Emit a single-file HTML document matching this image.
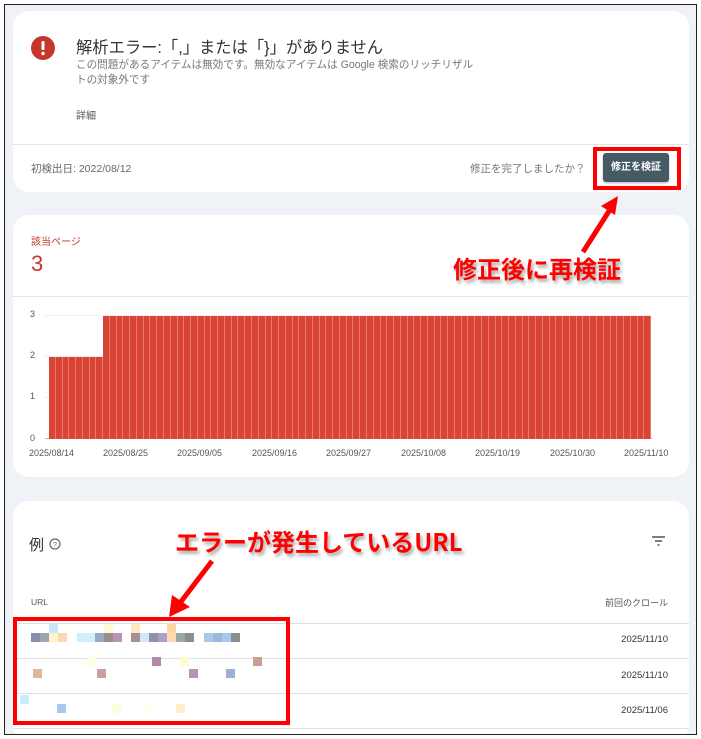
<!DOCTYPE html>
<html><head><meta charset="utf-8"><style>
*{margin:0;padding:0;box-sizing:border-box}
body{width:701px;height:739px;background:#fff;position:relative;overflow:hidden;font-family:"Liberation Sans","Noto Sans CJK JP",sans-serif;color:#3c4043}
.frame{position:absolute;left:4px;top:4px;width:693px;height:731px;border:1px solid #222;background:#eff2f7;overflow:hidden}
.card{position:absolute;left:8px;width:676px;background:#fff;border-radius:16px}
.abs{position:absolute;white-space:nowrap}
.red{position:absolute;border:4px solid #f00}
.ann{position:absolute;color:#f00;font-weight:bold;font-size:24px;white-space:nowrap;text-shadow:2px 3px 3px rgba(0,0,0,.35);font-family:"Noto Sans CJK JP",sans-serif}
.bars{position:absolute;left:44px;top:311px;width:602px;height:123px;display:flex;align-items:flex-end}
.bars div{flex:1;background:#d94435;border-right:1px solid #e8796f}
.yl{position:absolute;left:25px;font-size:9px;color:#555}
.xl{position:absolute;top:443px;font-size:9px;color:#555}
.gl{position:absolute;left:40px;width:607px;height:1px;background:#eee}
.row{position:absolute;left:8px;width:676px;height:1px;background:#e0e0e0}
.date{position:absolute;right:28px;font-size:9.5px;color:#333}
.px{position:absolute;width:9px;height:9px}
</style></head><body>
<div class="frame">
<div class="card" style="top:6px;height:181px"></div>
<div class="card" style="top:210px;height:262px"></div>
<div class="card" style="top:496px;height:240px"></div>

<svg class="abs" style="left:26px;top:31px" width="24" height="24" viewBox="0 0 24 24"><circle cx="12" cy="12" r="12" fill="#c5372c"/><rect x="10.5" y="5" width="3" height="9" rx="1" fill="#fff"/><circle cx="12" cy="17.5" r="1.7" fill="#fff"/></svg>
<div class="abs" style="left:71px;top:29px;font-size:16.3px;color:#333">解析エラー:「,」または「}」がありません</div>
<div class="abs" style="left:71px;top:53px;font-size:10.6px;color:#777;line-height:15px">この問題があるアイテムは無効です。無効なアイテムは Google 検索のリッチリザル<br>トの対象外です</div>
<div class="abs" style="left:71px;top:102px;font-size:10px;color:#555">詳細</div>
<div class="abs" style="left:8px;top:139px;width:676px;height:1px;background:#e3e3e3"></div>
<div class="abs" style="left:26px;top:156px;font-size:10.5px;color:#666">初検出日: 2022/08/12</div>
<div class="abs" style="left:465px;top:156px;font-size:10.5px;color:#777">修正を完了しましたか？</div>
<div class="abs" style="left:598px;top:148px;width:66px;height:29px;background:#465a64;border-radius:3px;color:#fff;font-size:10px;font-weight:bold;text-align:center;line-height:29px;box-shadow:0 1px 2px rgba(0,0,0,.3)">修正を検証</div>
<div class="red" style="left:588px;top:142px;width:88px;height:43px"></div>
<svg class="abs" style="left:570px;top:185px" width="50" height="70"><line x1="8" y1="62" x2="36" y2="18" stroke="#f00" stroke-width="5"/><polygon points="43,6 26,16 40,25" fill="#f00"/></svg>
<div class="ann" style="left:448px;top:245px">修正後に再検証</div>

<div class="abs" style="left:26px;top:228px;font-size:10px;color:#c5372c">該当ページ</div>
<div class="abs" style="left:26px;top:246px;font-size:22px;color:#c5372c">3</div>
<div class="abs" style="left:8px;top:291px;width:676px;height:1px;background:#e3e3e3"></div>
<div class="gl" style="top:310px"></div><div class="gl" style="top:351px"></div><div class="gl" style="top:392px"></div><div class="gl" style="top:433px;background:#bbb"></div>
<div class="yl" style="top:304px">3</div><div class="yl" style="top:345px">2</div><div class="yl" style="top:386px">1</div><div class="yl" style="top:428px">0</div>
<div class="bars" id="bars"></div>
<div class="xl" style="left:24px">2025/08/14</div>
<div class="xl" style="left:98px">2025/08/25</div>
<div class="xl" style="left:172px">2025/09/05</div>
<div class="xl" style="left:247px">2025/09/16</div>
<div class="xl" style="left:321px">2025/09/27</div>
<div class="xl" style="left:396px">2025/10/08</div>
<div class="xl" style="left:470px">2025/10/19</div>
<div class="xl" style="left:545px">2025/10/30</div>
<div class="xl" style="left:619px">2025/11/10</div>

<div class="abs" style="left:24px;top:529px;font-size:15px;color:#333">例</div>
<svg class="abs" style="left:44px;top:533px" width="12" height="12"><circle cx="6" cy="6" r="5" fill="none" stroke="#666" stroke-width="1.2"/><text x="6" y="9" font-size="7" text-anchor="middle" fill="#666" font-family="Liberation Sans">?</text></svg>
<svg class="abs" style="left:646px;top:530px" width="16" height="12"><path d="M1 2h13M4 6h7M6.5 10h2" stroke="#555" stroke-width="1.4"/></svg>
<div class="ann" style="left:170px;top:518px">エラーが発生しているURL</div>
<svg class="abs" style="left:155px;top:550px" width="60" height="65"><line x1="52" y1="6" x2="20" y2="48" stroke="#f00" stroke-width="5"/><polygon points="9,62 12,40 30,52" fill="#f00"/></svg>
<div class="abs" style="left:26px;top:592px;font-size:8.5px;color:#555">URL</div>
<div class="abs" style="right:28px;top:591px;font-size:9px;color:#555">前回のクロール</div>
<div class="row" style="top:618px"></div><div class="row" style="top:653px"></div><div class="row" style="top:688px"></div><div class="row" style="top:723px"></div>
<div class="date" style="top:629px">2025/11/10</div>
<div class="date" style="top:665px">2025/11/10</div>
<div class="date" style="top:700px">2025/11/06</div>
<div id="pix"></div>
<div class="red" style="left:8px;top:612px;width:277px;height:108px"></div>
</div>
<script>
var b=document.getElementById('bars'),h='';
for(var i=0;i<89;i++)h+='<div style="height:'+(i<8?82:123)+'px"></div>';
b.innerHTML=h;
var p=[[30,632,'#8a8fae'],[39,632,'#9aa8a8'],[48,623,'#cce8f8'],[48,632,'#fff5cc'],[57,632,'#fcd9b0'],[76,632,'#cfeefc'],[85,632,'#d6eefa'],[94,632,'#9aa8c8'],[103,623,'#fffbd6'],[103,632,'#9c8c90'],[112,632,'#b893b8'],[130,623,'#ffe9c2'],[130,632,'#a89090'],[139,632,'#cceafc'],[148,632,'#9090a8'],[157,632,'#aaa0c8'],[166,623,'#fdd6a8'],[166,632,'#fcd9b0'],[175,632,'#9aa8a8'],[184,632,'#8e8e8e'],[203,632,'#a8c8ec'],[212,632,'#9ab8dc'],[221,632,'#a8c8ec'],[230,632,'#8e8e8e'],[32,668,'#dcb8a0'],[86,656,'#fffde6'],[96,668,'#c8a0a0'],[151,656,'#b08aa8'],[179,656,'#fffbd6'],[188,668,'#b893b8'],[225,668,'#9ab0d8'],[252,656,'#c8a090'],[19,694,'#cceafc'],[56,703,'#a8c8ec'],[111,703,'#fffde0'],[141,703,'#fffef0'],[175,703,'#ffeec8']];
var s='';p.forEach(function(q){s+='<div class="px" style="left:'+(q[0]-4)+'px;top:'+(q[1]-4)+'px;background:'+q[2]+'"></div>'});
document.getElementById('pix').innerHTML=s;
</script>
</body></html>
